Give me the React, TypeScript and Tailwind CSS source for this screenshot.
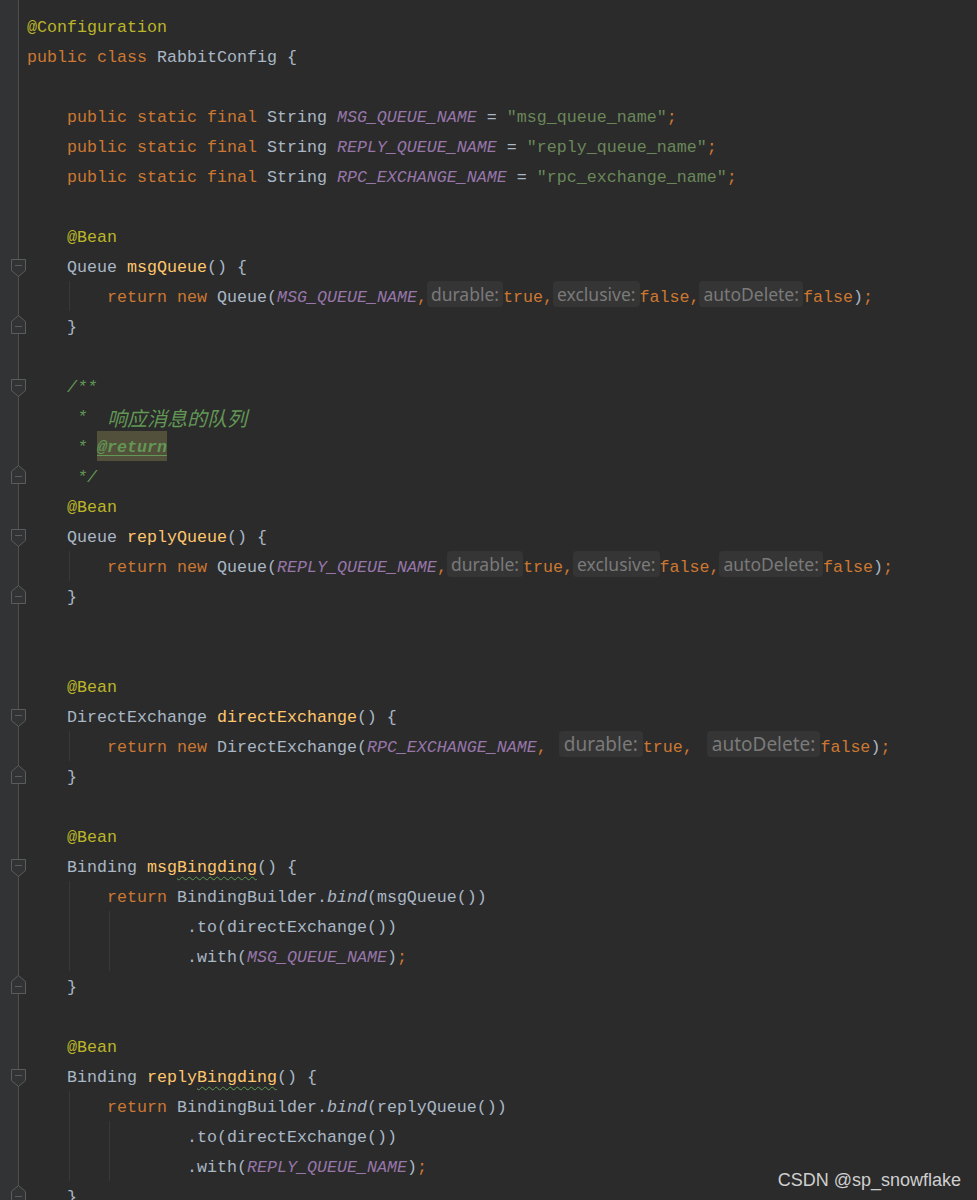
import React from "react";

type LineProps = {
  indent?: number;
  guides?: number;
  fold?: "start" | "end";
  children?: React.ReactNode;
};

const K = ({ children }: { children: React.ReactNode }) => (
  <span className="text-[#cc7832]">{children}</span>
);
const T = ({ children }: { children: React.ReactNode }) => (
  <span className="text-[#a9b7c6]">{children}</span>
);
const A = ({ children }: { children: React.ReactNode }) => (
  <span className="text-[#bbb529]">{children}</span>
);
const F = ({ children }: { children: React.ReactNode }) => (
  <span className="text-[#ffc66d]">{children}</span>
);
const C = ({ children }: { children: React.ReactNode }) => (
  <span className="italic text-[#9876aa]">{children}</span>
);
const S = ({ children }: { children: React.ReactNode }) => (
  <span className="text-[#6a8759]">{children}</span>
);
const D = ({ children }: { children: React.ReactNode }) => (
  <span className="italic text-[#629755]">{children}</span>
);

const Hint = ({ children, big }: { children: React.ReactNode; big?: boolean }) => (
  <span
    className={
      big
        ? "mb-[8px] flex h-[26px] items-center rounded-[4px] bg-[#353535] px-[5px] font-['Noto_Sans',sans-serif] text-[19px] not-italic text-[#7a7a7a]"
        : "mb-[8px] flex h-[26px] items-center rounded-[4px] bg-[#353535] px-[4px] font-['Noto_Sans',sans-serif] text-[17.5px] not-italic text-[#7a7a7a]"
    }
  >
    {children}
  </span>
);

const Typo = ({ children }: { children: React.ReactNode }) => (
  <span className="underline decoration-[#5f9a55] decoration-wavy decoration-1 underline-offset-[4px]">
    {children}
  </span>
);

const FoldStart = () => (
  <svg className="absolute left-0 top-0 z-10 overflow-visible" width="30" height="30">
    <path d="M11.5 8.5H25.5V19.5L18.5 25.5L11.5 19.5Z" fill="#313335" stroke="#5c5c5c" />
    <path d="M15 14.5H22" stroke="#5c5c5c" />
  </svg>
);

const FoldEnd = () => (
  <svg className="absolute left-0 top-0 z-10 overflow-visible" width="30" height="30">
    <path d="M11.5 22.5V10.5L18.5 4.5L25.5 10.5V22.5Z" fill="#313335" stroke="#5c5c5c" />
    <path d="M15 15.5H22" stroke="#5c5c5c" />
  </svg>
);

const Line = ({ indent = 0, guides = 0, fold, children }: LineProps) => {
  return (
    <div className="flex h-[30px] shrink-0">
      <div className="relative w-[19px] shrink-0 border-r border-[#4e4e4e] bg-[#313335]">
        {fold === "start" && <FoldStart />}
        {fold === "end" && <FoldEnd />}
      </div>
      <div className="flex h-full items-center whitespace-pre pl-[8px] pt-[4px]">
        {Array.from({ length: indent }).map((_, i) =>
          i >= 1 && i <= guides ? (
            <span key={i} className="-mt-[4px] flex h-[30px] w-[40px] shrink-0">
              <span className="ml-[2px] h-full w-px bg-[#393939]" />
            </span>
          ) : (
            <span key={i} className="h-full w-[40px] shrink-0" />
          )
        )}
        {children}
      </div>
    </div>
  );
};

const App = () => {
  return (
    <div className="relative flex h-[1200px] w-[977px] flex-col overflow-hidden bg-[#2b2b2b] font-['Liberation_Mono','Noto_Sans_CJK_SC',monospace] text-[16.67px] leading-[26px] text-[#a9b7c6]">
      <div className="flex h-[11px] shrink-0">
        <div className="w-[19px] shrink-0 border-r border-[#4e4e4e] bg-[#313335]" />
      </div>

      <Line>
        <A>@Configuration</A>
      </Line>
      <Line>
        <K>public class </K>
        <T>{"RabbitConfig {"}</T>
      </Line>
      <Line />
      <Line indent={1}>
        <K>public static final </K>
        <T>String </T>
        <C>MSG_QUEUE_NAME</C>
        <T> = </T>
        <S>"msg_queue_name"</S>
        <K>;</K>
      </Line>
      <Line indent={1}>
        <K>public static final </K>
        <T>String </T>
        <C>REPLY_QUEUE_NAME</C>
        <T> = </T>
        <S>"reply_queue_name"</S>
        <K>;</K>
      </Line>
      <Line indent={1}>
        <K>public static final </K>
        <T>String </T>
        <C>RPC_EXCHANGE_NAME</C>
        <T> = </T>
        <S>"rpc_exchange_name"</S>
        <K>;</K>
      </Line>
      <Line />

      <Line indent={1}>
        <A>@Bean</A>
      </Line>
      <Line indent={1} fold="start">
        <T>Queue </T>
        <F>msgQueue</F>
        <T>{"() {"}</T>
      </Line>
      <Line indent={2} guides={1}>
        <K>return new </K>
        <T>Queue(</T>
        <C>MSG_QUEUE_NAME</C>
        <K>,</K>
        <Hint>durable:</Hint>
        <K>true,</K>
        <Hint>exclusive:</Hint>
        <K>false,</K>
        <Hint>autoDelete:</Hint>
        <K>false</K>
        <T>)</T>
        <K>;</K>
      </Line>
      <Line indent={1} fold="end">
        <T>{"}"}</T>
      </Line>
      <Line />

      <Line indent={1} fold="start">
        <D>/**</D>
      </Line>
      <Line indent={1}>
        <D>{" *  "}</D>
        <span className="font-['Noto_Sans_CJK_SC',sans-serif] text-[20px] italic text-[#629755]">
          响应消息的队列
        </span>
      </Line>
      <Line indent={1}>
        <D>{" * "}</D>
        <span className="-mt-[4px] flex h-[30px] items-center bg-[#52503a] pt-[4px] font-bold italic text-[#629755] underline underline-offset-[3px]">
          @return
        </span>
      </Line>
      <Line indent={1} fold="end">
        <D>{" */"}</D>
      </Line>
      <Line indent={1}>
        <A>@Bean</A>
      </Line>
      <Line indent={1} fold="start">
        <T>Queue </T>
        <F>replyQueue</F>
        <T>{"() {"}</T>
      </Line>
      <Line indent={2} guides={1}>
        <K>return new </K>
        <T>Queue(</T>
        <C>REPLY_QUEUE_NAME</C>
        <K>,</K>
        <Hint>durable:</Hint>
        <K>true,</K>
        <Hint>exclusive:</Hint>
        <K>false,</K>
        <Hint>autoDelete:</Hint>
        <K>false</K>
        <T>)</T>
        <K>;</K>
      </Line>
      <Line indent={1} fold="end">
        <T>{"}"}</T>
      </Line>
      <Line />
      <Line />

      <Line indent={1}>
        <A>@Bean</A>
      </Line>
      <Line indent={1} fold="start">
        <T>DirectExchange </T>
        <F>directExchange</F>
        <T>{"() {"}</T>
      </Line>
      <Line indent={2} guides={1}>
        <K>return new </K>
        <T>DirectExchange(</T>
        <C>RPC_EXCHANGE_NAME</C>
        <K>{", "}</K>
        <span className="ml-[2px] flex">
          <Hint big>durable:</Hint>
        </span>
        <K>{"true, "}</K>
        <span className="ml-[4px] flex">
          <Hint big>autoDelete:</Hint>
        </span>
        <K>false</K>
        <T>)</T>
        <K>;</K>
      </Line>
      <Line indent={1} fold="end">
        <T>{"}"}</T>
      </Line>
      <Line />

      <Line indent={1}>
        <A>@Bean</A>
      </Line>
      <Line indent={1} fold="start">
        <T>Binding </T>
        <F>
          msg<Typo>Bingding</Typo>
        </F>
        <T>{"() {"}</T>
      </Line>
      <Line indent={2} guides={1}>
        <K>return </K>
        <T>BindingBuilder.</T>
        <span className="italic text-[#a9b7c6]">bind</span>
        <T>(msgQueue())</T>
      </Line>
      <Line indent={4} guides={2}>
        <T>.to(directExchange())</T>
      </Line>
      <Line indent={4} guides={2}>
        <T>.with(</T>
        <C>MSG_QUEUE_NAME</C>
        <T>)</T>
        <K>;</K>
      </Line>
      <Line indent={1} fold="end">
        <T>{"}"}</T>
      </Line>
      <Line />

      <Line indent={1}>
        <A>@Bean</A>
      </Line>
      <Line indent={1} fold="start">
        <T>Binding </T>
        <F>
          reply<Typo>Bingding</Typo>
        </F>
        <T>{"() {"}</T>
      </Line>
      <Line indent={2} guides={1}>
        <K>return </K>
        <T>BindingBuilder.</T>
        <span className="italic text-[#a9b7c6]">bind</span>
        <T>(replyQueue())</T>
      </Line>
      <Line indent={4} guides={2}>
        <T>.to(directExchange())</T>
      </Line>
      <Line indent={4} guides={2}>
        <T>.with(</T>
        <C>REPLY_QUEUE_NAME</C>
        <T>)</T>
        <K>;</K>
      </Line>
      <Line indent={1} fold="end">
        <T>{"}"}</T>
      </Line>

      <div className="absolute bottom-[11px] right-[16px] font-['Liberation_Sans',sans-serif] text-[18px] leading-none text-[#cfcfcf]">
        CSDN @sp_snowflake
      </div>
    </div>
  );
};

export default App;
